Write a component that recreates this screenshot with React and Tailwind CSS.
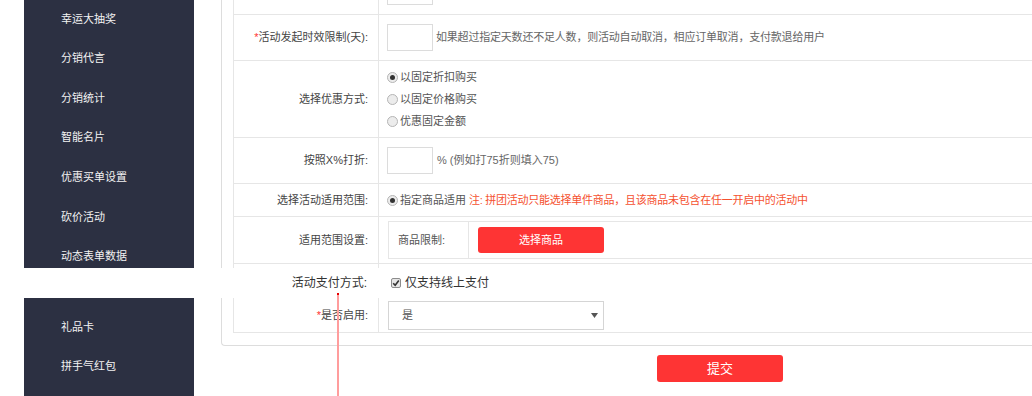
import React from 'react';

const topMenu = ['幸运大抽奖', '分销代言', '分销统计', '智能名片', '优惠买单设置', '砍价活动', '动态表单数据'];
const bottomMenu = ['礼品卡', '拼手气红包'];

function Sidebar({ items, first }) {
  return (
    <div className={`ml-[24px] w-[170px] shrink-0 bg-[#2c3042] pl-[37px] text-[11px] text-[#f2f2f2] ${first}`}>
      {items.map((item) => (
        <div key={item} className="h-[39.6px] flex items-center">
          {item}
        </div>
      ))}
    </div>
  );
}

function Row({ label, required, height, pad = 'pl-[8px]', children }) {
  return (
    <div className={`flex border-b border-[#e6e6e6] ${height}`}>
      <div className="w-[145px] shrink-0 border-r border-[#e6e6e6] flex items-center justify-end pr-[10px] text-[#444]">
        {required && <span className="text-[#ff3333]">*</span>}
        {label}
      </div>
      <div className={`flex-1 min-w-0 flex items-center ${pad}`}>{children}</div>
    </div>
  );
}

function Radio({ checked }) {
  return (
    <span className="w-[11px] h-[11px] shrink-0 rounded-full border border-[#b5b5b5] bg-[#ececec] flex items-center justify-center">
      {checked && <span className="w-[5px] h-[5px] rounded-full bg-[#333]" />}
    </span>
  );
}

function NumInput() {
  return <input type="text" className="w-[46px] h-[27px] shrink-0 border border-[#dcdcdc] bg-white outline-none" />;
}

export default function App() {
  return (
    <div className="relative w-[1032px] h-[396px] overflow-hidden bg-white text-[11px] font-['Liberation_Sans','Noto_Sans_CJK_SC',sans-serif]">
      {/* upper part of the form */}
      <div className="flex h-[268px] overflow-hidden">
        <Sidebar items={topMenu} first="-mt-px" />
        <div className="flex-1 min-w-0 pl-[27px] flex">
          <div className="flex-1 min-w-0 border-l border-[#dddddd] pl-[11px]">
            <div className="mt-[-31px] border-l border-[#e6e6e6]">
              <Row label="" height="h-[46px]">
                <NumInput />
              </Row>
              <Row label="活动发起时效限制(天):" required height="h-[46px]">
                <NumInput />
                <span className="ml-[3px] text-[#666] whitespace-nowrap tracking-[-0.2px]">
                  如果超过指定天数还不足人数，则活动自动取消，相应订单取消，支付款退给用户
                </span>
              </Row>
              <Row label="选择优惠方式:" height="h-[77px]">
                <div className="flex flex-col text-[#555]">
                  {['以固定折扣购买', '以固定价格购买', '优惠固定金额'].map((opt, i) => (
                    <div key={opt} className="h-[22px] flex items-center gap-[2px]">
                      <Radio checked={i === 0} />
                      <span>{opt}</span>
                    </div>
                  ))}
                </div>
              </Row>
              <Row label="按照X%打折:" height="h-[46px]">
                <NumInput />
                <span className="ml-[4px] text-[#666]">% (例如打75折则填入75)</span>
              </Row>
              <Row label="选择活动适用范围:" height="h-[33px]">
                <Radio checked />
                <span className="ml-[2px] text-[#555] whitespace-nowrap">指定商品适用</span>
                <span className="ml-[3px] text-[#f5512f] whitespace-nowrap tracking-[-0.25px]">
                  注: 拼团活动只能选择单件商品，且该商品未包含在任一开启中的活动中
                </span>
              </Row>
              <Row label="适用范围设置:" height="h-[47px]" pad="pl-[9px]">
                <div className="flex-1 h-[38px] border border-r-0 border-[#e6e6e6] flex items-center">
                  <div className="w-[80px] h-full border-r border-[#e6e6e6] flex items-center pl-[9px] text-[#555]">
                    商品限制:
                  </div>
                  <button className="ml-[9px] w-[126px] h-[26px] rounded-[3px] bg-[#fe3434] text-white text-[11px]">
                    选择商品
                  </button>
                </div>
              </Row>
              <Row label="" height="h-[40px]" />
            </div>
          </div>
        </div>
      </div>

      {/* payment row */}
      <div className="flex h-[30px] items-center text-[12px] text-[#333]">
        <div className="w-[378px] shrink-0 text-right pr-[11px]">活动支付方式:</div>
        <span className="ml-[13px] w-[10px] h-[10px] rounded-[2px] border border-[#8c8c8c] bg-[#e6e6e6] flex items-center justify-center">
          <svg width="8" height="8" viewBox="0 0 8 8">
            <path d="M1.2 4.2 L3.2 6.2 L6.8 1.6" fill="none" stroke="#333" strokeWidth="1.6" />
          </svg>
        </span>
        <span className="ml-[4px]">仅支持线上支付</span>
      </div>

      {/* lower part of the form */}
      <div className="flex h-[98px]">
        <Sidebar items={bottomMenu} first="pt-[9px]" />
        <div className="flex-1 min-w-0 pl-[27px]">
          <div className="border-l border-b border-[#dddddd] rounded-bl-[4px] pl-[11px] pb-[12px]">
            <div className="border-l border-[#e6e6e6]">
              <Row label="是否启用:" required height="h-[35px]" pad="pl-[9px]">
                <div className="w-[216px] h-[29px] border border-[#d5d5d5] flex items-center justify-between pl-[13px] pr-[5px] text-[#555]">
                  <span>是</span>
                  <svg width="7" height="5" viewBox="0 0 7 5">
                    <path d="M0 0 H7 L3.5 5 Z" fill="#555" />
                  </svg>
                </div>
              </Row>
            </div>
          </div>
          <button className="mt-[9px] ml-[436px] w-[126px] h-[27px] rounded-[3px] bg-[#fe3434] text-white text-[13px]">
            提交
          </button>
        </div>
      </div>

      {/* red guide line */}
      <div className="absolute left-[337px] top-[293px] w-[2px] h-[103px] bg-[#ff9d9d]" />
      <div className="absolute left-[337px] top-[293px] w-[2px] h-[2px] bg-[#e60000]" />
    </div>
  );
}
